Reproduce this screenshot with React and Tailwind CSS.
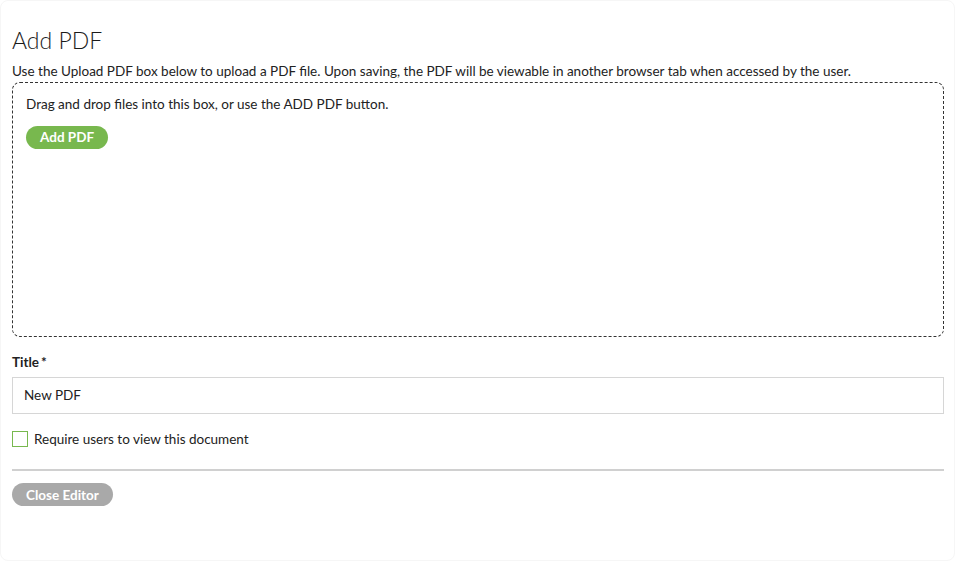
import React from "react";

export default function App() {
  return (
    <div className="w-[956px] h-[562px] bg-white" style={{ fontFamily: "Lato, 'Noto Sans', sans-serif" }}>
      <div className="h-[561px] w-[955px] rounded-lg border border-[#f6f6f6] px-[11px] pt-[26px] text-[#222]">
        <h1 className="text-[23px] font-light leading-[26px] text-[#1a1a1a]">Add PDF</h1>
        <p className="mt-[10px] text-[13.5px] leading-[16px]">
          Use the Upload PDF box below to upload a PDF file. Upon saving, the PDF will be viewable in another browser tab when accessed by the user.
        </p>
        <div className="mt-[3px] h-[255px] w-[932px] rounded-lg border border-dashed border-[#333] px-[13px] pt-[13px]">
          <p className="text-[13.5px] leading-[16px]">Drag and drop files into this box, or use the ADD PDF button.</p>
          <button className="mt-[14px] h-[23px] rounded-full bg-[#78b84e] px-[14px] text-[13.5px] font-bold text-white">Add PDF</button>
        </div>
        <div className="mt-[17px] text-[13.5px] font-bold leading-[16px]">Title<span className="ml-[2px]">*</span></div>
        <div className="mt-[7px] flex h-[37px] w-[932px] items-center border border-[#d6d6d6] px-[11px] text-[13.5px]">New PDF</div>
        <label className="mt-[15px] flex items-center gap-[6px] text-[13.5px]">
          <span className="h-[16px] w-[16px] border border-[#78b84e] bg-white" />
          Require users to view this document
        </label>
        <div className="mt-[20px] h-[2px] w-[932px] bg-[#d0d0d0]" />
        <button className="mt-[12px] h-[23px] rounded-full bg-[#a9a9a9] px-[14px] text-[13.5px] font-bold text-white">Close Editor</button>
      </div>
    </div>
  );
}
